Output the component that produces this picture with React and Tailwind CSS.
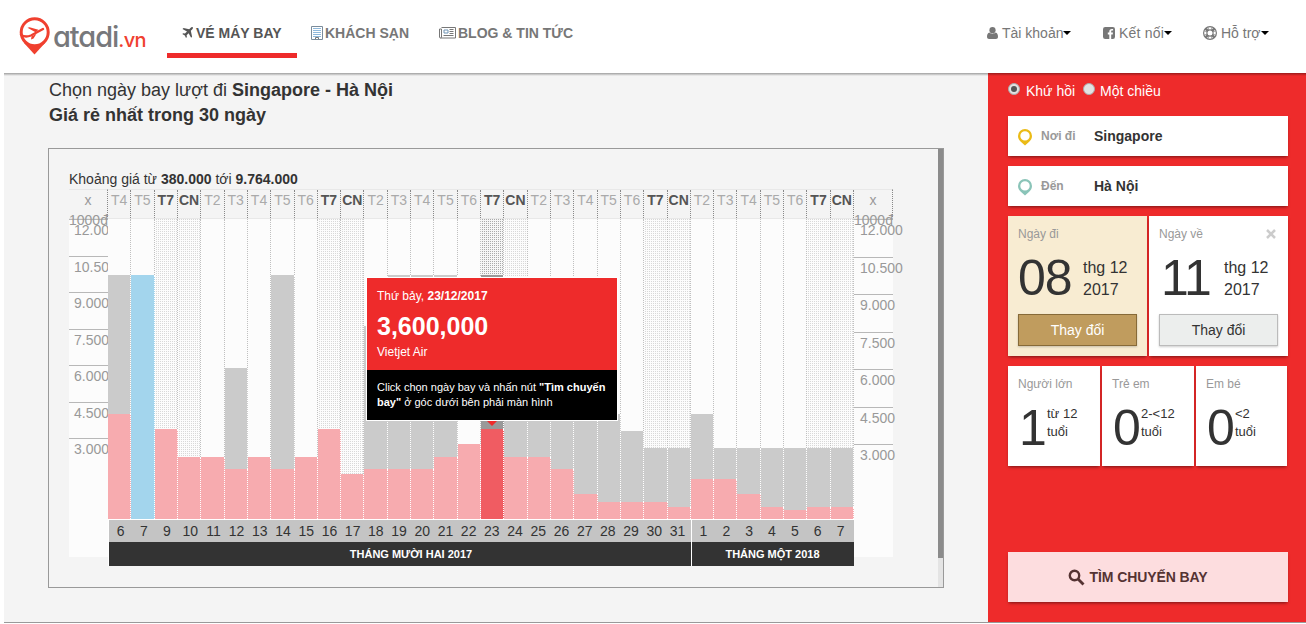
import React from 'react';

// bar heights in px over a 300px plot
const days = [
  { day: 6, wd: 'T4', ret: 244, go: 105 },
  { day: 7, wd: 'T5', selected: 244 },
  { day: 9, wd: 'T7', go: 90 },
  { day: 10, wd: 'CN', go: 62 },
  { day: 11, wd: 'T2', go: 62 },
  { day: 12, wd: 'T3', ret: 151, go: 50 },
  { day: 13, wd: 'T4', go: 62 },
  { day: 14, wd: 'T5', ret: 244, go: 50 },
  { day: 15, wd: 'T6', go: 62 },
  { day: 16, wd: 'T7', go: 90 },
  { day: 17, wd: 'CN', go: 45 },
  { day: 18, wd: 'T2', ret: 193, go: 50 },
  { day: 19, wd: 'T3', ret: 244, go: 50 },
  { day: 20, wd: 'T4', ret: 244, go: 50 },
  { day: 21, wd: 'T5', ret: 244, go: 62 },
  { day: 22, wd: 'T6', go: 75 },
  { day: 23, wd: 'T7', ret: 244, go: 90, active: true },
  { day: 24, wd: 'CN', ret: 105, go: 62 },
  { day: 25, wd: 'T2', ret: 105, go: 62 },
  { day: 26, wd: 'T3', ret: 105, go: 50 },
  { day: 27, wd: 'T4', ret: 105, go: 25 },
  { day: 28, wd: 'T5', ret: 105, go: 17 },
  { day: 29, wd: 'T6', ret: 88, go: 17 },
  { day: 30, wd: 'T7', ret: 71, go: 17 },
  { day: 31, wd: 'CN', ret: 71, go: 12 },
  { day: 1, wd: 'T2', ret: 105, go: 40 },
  { day: 2, wd: 'T3', ret: 71, go: 40 },
  { day: 3, wd: 'T4', ret: 71, go: 25 },
  { day: 4, wd: 'T5', ret: 71, go: 12 },
  { day: 5, wd: 'T6', ret: 71, go: 9 },
  { day: 6, wd: 'T7', ret: 71, go: 12 },
  { day: 7, wd: 'CN', ret: 71, go: 12 },
];

const prices = ['12.000', '10.500', '9.000', '7.500', '6.000', '4.500', '3.000'];

const isWeekend = (wd) => wd === 'T7' || wd === 'CN';

function Logo() {
  return (
    <div className="flex items-start w-[147px] pl-[19px] pt-[17px]">
      <svg width="31" height="38" viewBox="0 0 31 38" className="shrink-0">
        <path d="M5 26 15.500 37.500 26 26z" fill="#f0402f" />
        <circle cx="15.700" cy="15.300" r="13.500" fill="#fff" stroke="#f0402f" strokeWidth="3" />
        <path d="M2 17.500C5 20.500 8 20 12 18.500L24 12" fill="none" stroke="#f0402f" strokeWidth="2.400" strokeLinecap="round" />
        <path d="M8.500 10.800 10.500 10.200 19.500 12.800 16.500 15.200zM12.500 19.500 17.500 16.800 14.500 21.500 12 22.500z" fill="#f0402f" />
      </svg>
      <div className="ml-[3px] mt-[2px] whitespace-nowrap font-['Inter',sans-serif] text-[29px] font-medium leading-[35px] tracking-[-1.1px] text-[#77787b] [font-feature-settings:'cv11']">
        atadi<span className="text-[20px] tracking-[-0.6px] text-[#f0402f]">.vn</span>
      </div>
    </div>
  );
}

function PlaneIcon() {
  return (
    <svg width="12" height="12" viewBox="0 0 12 12" fill="#555" className="-ml-px mr-px">
      <path d="M11.700.3c.5.500.1 1.500-.6 2.200L9.800 3.800l1.300 5.900-1 1-2.500-4.500-2 2 .3 1.800-.9.900L3.800 8.400 1.300 7.100l.9-.9 1.800.3 2-2L1.500 2l1-1.100 5.700 1.300L9.500.9C10.200.2 11.200-.2 11.700.3z" />
    </svg>
  );
}

function HotelIcon() {
  return (
    <svg width="12" height="14" viewBox="0 0 12 14" fill="none">
      <path d="M.5.5h11v13H.5z" stroke="#7b8c9b" />
      <path d="M2 2.500h8M2 4.500h8M2 6.500h8M2 8.500h8M2 10.500h8" stroke="#8fb9dc" />
      <path d="M4.500 13v-1.500h3V13" stroke="#777" />
    </svg>
  );
}

function NewsIcon() {
  return (
    <svg width="17" height="12" viewBox="0 0 17 12" fill="none" stroke="#777">
      <path d="M2.500.5h14v10.500H1.500q-1 0-1-1V2h2v8q0 1-1 1" />
      <path d="M5 3h4v3H5z" stroke="#6f93b3" />
      <path d="M10.500 2.500h4M10.500 4.500h4M10.500 6.500h4M4.500 8.500h10" />
    </svg>
  );
}

function UserIcon() {
  return (
    <svg width="11" height="12" viewBox="0 0 11 12" fill="#777">
      <circle cx="5.500" cy="3.200" r="3.100" />
      <path d="M2.500 5.600C.7 6 0 8 0 9.800 0 11.200.9 12 2 12h7c1.100 0 2-.8 2-2.200C11 8 10.300 6 8.500 5.600 7 7.200 4 7.200 2.500 5.600z" />
    </svg>
  );
}

function FacebookIcon() {
  return (
    <svg width="12" height="12" viewBox="0 0 12 12">
      <rect width="12" height="12" rx="2.200" fill="#777" />
      <path d="M8.200 12V7.400h1.500L10 5.600H8.200V4.500c0-.5.200-.9.900-.9h1V2c-2.600-.4-3.800.5-3.800 2.300v1.300H4.800v1.800h1.500V12z" fill="#fff" />
    </svg>
  );
}

function HelpIcon() {
  return (
    <svg width="14" height="14" viewBox="0 0 14 14" fill="none" stroke="#777">
      <circle cx="7" cy="7" r="4.700" strokeWidth="3" stroke="#fff" />
      <path d="M2.500 2.500l2.500 2.500M9 9l2.500 2.500M11.500 2.500L9 5M5 9l-2.500 2.500" strokeWidth="2.400" />
      <circle cx="7" cy="7" r="6.400" strokeWidth="1.200" />
      <circle cx="7" cy="7" r="3.100" strokeWidth="1.200" />
      <path d="M5.200 1.500v2.500M8.800 1.500v2.500M5.200 10v2.500M8.800 10v2.500M1.500 5.200h2.500M1.500 8.800h2.500M10 5.200h2.500M10 8.800h2.500" strokeWidth=".8" />
    </svg>
  );
}

function PinIcon({ color }) {
  return (
    <svg width="14" height="17" viewBox="0 0 14 17" fill={color}>
      <path fillRule="evenodd" d="M7 0a7 7 0 0 1 7 7c0 2.500-1.200 4.300-2.800 5.800L7 16.500 2.800 12.800C1.200 11.300 0 9.500 0 7a7 7 0 0 1 7-7zm0 2.200a4.700 4.700 0 1 0 0 9.400 4.700 4.700 0 0 0 0-9.400z" />
    </svg>
  );
}

function Caret() {
  return <span className="shrink-0 border-x-4 border-t-4 border-x-transparent border-t-black" />;
}

function TopMenu() {
  return (
    <header className="flex h-[73px] bg-white">
      <Logo />
      <nav className="ml-5 flex h-[58px] text-sm font-bold text-[#777]">
        <a className="flex w-[130px] items-center gap-[2px] border-b-[5px] border-[#ee2b2b] pl-[15px] pt-[13px] text-[#555] whitespace-nowrap">
          <PlaneIcon />VÉ MÁY BAY
        </a>
        <a className="flex items-center gap-[2px] pb-[5px] pl-[14px] pt-[13px] whitespace-nowrap">
          <HotelIcon />KHÁCH SẠN
        </a>
        <a className="flex items-center gap-[2px] pb-[5px] pl-[30px] pt-[13px] whitespace-nowrap">
          <NewsIcon />BLOG &amp; TIN TỨC
        </a>
      </nav>
      <div className="ml-auto flex h-[66px] w-[319px] items-center text-sm text-[#777] whitespace-nowrap">
        <a className="flex w-[116px] items-center"><UserIcon /><span className="ml-1">Tài khoản</span><Caret /></a>
        <a className="flex w-[100px] items-center"><FacebookIcon /><span className="ml-1 tracking-[0.2px]">Kết nối</span><Caret /></a>
        <a className="flex items-center"><HelpIcon /><span className="ml-1">Hỗ trợ</span><Caret /></a>
      </div>
    </header>
  );
}

function AxisHead() {
  return (
    <div className="relative z-10 h-[30px] w-[39px] border-y border-y-[#e8e8e8] border-r border-r-[#888] [border-right-style:dotted] text-center leading-5">
      <div className="h-5">x</div>
      <div className="h-5 w-[39px] text-left">1000đ</div>
    </div>
  );
}

function Axis({ side }) {
  const row = side === 'left' ? 'h-[36.5px]' : 'h-[37.5px]';
  return (
    <div className="w-[39px] text-sm text-[#999]">
      <AxisHead />
      <div className={`h-[338px] bg-[#fcfcfc] ${side === 'left' ? 'overflow-hidden' : ''}`}>
        {prices.map((p) => (
          <div key={p} className={`${row} border-t border-[#b8b8b8] leading-5 ${side === 'left' ? 'pl-[5px]' : 'pl-[6px]'}`}>{p}</div>
        ))}
      </div>
    </div>
  );
}

function Column({ d }) {
  let bg = 'bg-[#fcfcfc]';
  if (isWeekend(d.wd)) bg = 'bg-[conic-gradient(#d8d8d8_25%,#fcfcfc_0)] bg-[length:2px_2px]';
  if (d.active) bg = 'bg-[conic-gradient(#aaa_25%,#f6f6f6_0)] bg-[length:2px_2px]';
  const go = d.go || 0;
  return (
    <div className="flex min-w-0 flex-1 flex-col">
      <div className={`flex-1 border-r border-dotted border-[#c0c0c0] bg-clip-padding ${bg}`} />
      {d.selected && <div className="border-r border-dotted border-white bg-[#a3d5ed]" style={{ height: d.selected }} />}
      {d.ret && <div className={`border-r border-dotted border-white ${d.active ? 'bg-[#999]' : 'bg-[#cbcbcb]'}`} style={{ height: d.ret - go }} />}
      {d.go && <div className={`border-r border-dotted border-white ${d.active ? 'bg-[#f05c62]' : 'bg-[#f7abaf]'}`} style={{ height: go }} />}
    </div>
  );
}

function Tooltip() {
  return (
    <div className="absolute left-[259px] top-[89px] z-20 w-[250px] text-xs text-white shadow-[0_0_0_1px_#fff]">
      <div className="h-[92px] bg-[#ee2b2b] pl-[10px] pt-[9px]">
        <div className="leading-[18px]">Thứ bảy, <b>23/12/2017</b></div>
        <div className="pt-[6px] text-[25px] font-bold leading-[30px]">3,600,000</div>
        <div className="pt-px leading-[20px]">Vietjet Air</div>
      </div>
      <div className="h-[50px] bg-black pl-[10px] pt-[10px] text-[11px] leading-[15px] whitespace-nowrap">
        Click chọn ngày bay và nhấn nút <b>"Tìm chuyến<br />bay"</b> ở góc dưới bên phải màn hình
      </div>
      <span className="absolute left-[120px] top-[143px] border-x-[5px] border-t-[5px] border-x-transparent border-t-[#ee2b2b]" />
    </div>
  );
}

function Month({ name, list, width, title }) {
  return (
    <div className={`${width} border-l border-white`}>
      <div className="flex h-[22px] bg-[#c4c4c4] pr-[2px] text-sm leading-[23px] text-[#333]">
        {list.map((d) => <div key={d.day} className="min-w-0 flex-1">{d.day}</div>)}
      </div>
      <div className={`h-6 bg-[#333] text-[11px] font-bold leading-6 ${title}`}>{name}</div>
    </div>
  );
}

function PriceChart() {
  return (
    <div className="flex">
      <Axis side="left" />
      <div className="relative w-[746px]">
        <div className="flex h-[30px] border-y border-[#e8e8e8] text-center text-sm leading-[21px] text-[#aaa]">
          {days.map((d, i) => (
            <div key={i} className={`min-w-0 flex-1 border-r border-dotted border-[#888] ${isWeekend(d.wd) ? 'font-bold text-[#555]' : ''}`}>
              {d.wd}
            </div>
          ))}
        </div>
        <div className="flex h-[300px] bg-[#fcfcfc]">
          {days.map((d, i) => <Column key={i} d={d} />)}
        </div>
        <div className="flex h-[47px] border-t border-white text-center text-white">
          <Month name="THÁNG MƯỜI HAI 2017" list={days.slice(0, 25)} width="w-[583px]" title="pl-[22px]" />
          <Month name="THÁNG MỘT 2018" list={days.slice(25)} width="w-[163px]" title="pr-px" />
        </div>
        <Tooltip />
      </div>
      <Axis side="right" />
    </div>
  );
}

function DateBox({ label, day, depart }) {
  return (
    <div className={`w-[139px] px-[10px] pt-2 shadow-[0_2px_3px_-1px_rgba(0,0,0,0.5)] ${depart ? 'bg-[#f8ecd2]' : 'bg-white'}`}>
      <div className="flex h-5 items-center justify-between text-xs text-[#999]">
        {label}
        {!depart && (
          <svg width="10" height="10" viewBox="0 0 10 10" className="mr-[2px]" stroke="#ccc" strokeWidth="2.500">
            <path d="M1 1l8 8M9 1L1 9" />
          </svg>
        )}
      </div>
      <div className="flex h-[70px] pt-[6px]">
        <div className={`w-[65px] text-[50px] leading-[56px] ${depart ? 'tracking-[-1px]' : 'pl-[2px] tracking-[-1px]'}`}>{day}</div>
        <div className="pt-[7px] text-base leading-[22px]">thg 12<br />2017</div>
      </div>
      <button className={`h-8 w-[119px] border text-sm shadow-[0_1px_2px_rgba(0,0,0,0.2)] ${depart ? 'border-[#876a38] bg-[#c09c5e] text-white' : 'border-[#bbb] bg-[#eceeed] text-[#333]'}`}>
        Thay đổi
      </button>
    </div>
  );
}

function PersonBox({ label, count, age }) {
  return (
    <div className="w-[92px] bg-white pl-[10px] pt-2 shadow-[0_2px_3px_-1px_rgba(0,0,0,0.5)] last:w-[91px]">
      <div className="text-xs leading-5 text-[#999]">{label}</div>
      <div className="flex pt-[6px]">
        <div className="w-[29px] pl-px text-[50px] leading-[56px]">{count}</div>
        <div className="pt-[5px] text-[13px] leading-[18px] whitespace-nowrap">{age}<br />tuổi</div>
      </div>
    </div>
  );
}

function PlaceBox({ color, label, value }) {
  return (
    <div className="flex h-10 items-center bg-white pl-[10px] shadow-[0_2px_3px_-1px_rgba(0,0,0,0.5)]">
      <span className="mt-[3px]"><PinIcon color={color} /></span>
      <span className="ml-[9px] w-[53px] text-xs font-bold text-[#999]">{label}</span>
      <span className="text-sm font-bold">{value}</span>
    </div>
  );
}

function Radio({ checked }) {
  return (
    <span className="mb-[4px] flex h-3 w-3 items-center justify-center rounded-full border border-[#aaa] bg-[#e2e2e2]">
      {checked && <span className="h-[6px] w-[6px] rounded-full bg-[#555]" />}
    </span>
  );
}

function SearchPanel() {
  return (
    <aside className="flex w-[318px] flex-col bg-[#ee2b2b] pl-[20px]">
      <div className="flex h-[43px] items-center pb-[7px] text-sm text-white">
        <Radio checked /><span className="ml-[6px] mr-2">Khứ hồi</span>
        <Radio /><span className="ml-[5px]">Một chiều</span>
      </div>
      <div className="flex w-[280px] flex-col gap-[10px]">
        <PlaceBox color="#ebbb16" label="Nơi đi" value="Singapore" />
        <PlaceBox color="#8ac4b8" label="Đến" value="Hà Nội" />
        <div className="flex h-[140px] gap-[2px]">
          <DateBox label="Ngày đi" day="08" depart />
          <DateBox label="Ngày về" day="11" />
        </div>
        <div className="flex h-[100px] gap-[2px]">
          <PersonBox label="Người lớn" count="1" age="từ 12" />
          <PersonBox label="Trẻ em" count="0" age="2-<12" />
          <PersonBox label="Em bé" count="0" age="<2" />
        </div>
      </div>
      <button className="mb-5 mt-auto flex h-[50px] w-[280px] items-center justify-center gap-[5px] bg-[#fddddf] pr-[21px] text-sm font-bold text-[#533] shadow-[0_2px_3px_-1px_rgba(0,0,0,0.5)]">
        <svg width="17" height="17" viewBox="0 0 17 17" fill="none" stroke="#533">
          <circle cx="6.500" cy="6.500" r="4.700" strokeWidth="2.400" />
          <path d="M10 10l5.500 5.500" strokeWidth="2.800" />
        </svg>
        <span className="tracking-[-0.1px]">TÌM CHUYẾN BAY</span>
      </button>
    </aside>
  );
}

export default function App() {
  return (
    <div className="h-[624px] w-[1306px] overflow-hidden bg-white font-['Liberation_Sans',Arial,sans-serif] text-[#333]">
      <TopMenu />
      <div className="relative ml-1 flex h-[550px] border-b border-[#999] bg-[#f4f4f4]">
        <div className="absolute inset-x-0 top-0 h-[3px] bg-gradient-to-b from-black/35 to-transparent" />
        <main className="w-[984px] pl-[44px]">
          <div className="h-[75px] pl-px pt-[5px] text-lg leading-[25px]">
            Chọn ngày bay lượt đi <b>Singapore - Hà Nội</b><br />
            <b>Giá rẻ nhất trong 30 ngày</b>
          </div>
          <div className="flex h-[440px] w-[896px] justify-between border border-[#999]">
            <div className="pl-5 pt-5">
              <div className="h-5 text-sm leading-5">
                Khoảng giá từ <b>380.000</b> tới <b>9.764.000</b>
              </div>
              <PriceChart />
            </div>
            <div className="w-[5px] bg-[#e4e4e4]">
              <div className="h-[409px] bg-[#8b8b8b]" />
            </div>
          </div>
        </main>
        <SearchPanel />
      </div>
    </div>
  );
}
